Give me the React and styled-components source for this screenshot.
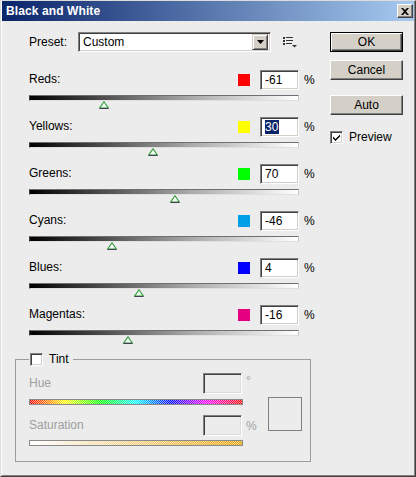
import React from "react";
import styled, { createGlobalStyle } from "styled-components";

const Global = createGlobalStyle`
  html, body { margin: 0; padding: 0; background: #ececec; }
  body {
    font-family: "Liberation Sans", Arial, sans-serif;
    font-size: 12px;
    color: #000;
  }
  * { box-sizing: border-box; }
`;

const Window = styled.div`
  width: 416px;
  height: 477px;
  background: #ececec;
  border: 1px solid;
  border-color: #dcdcdc #404040 #404040 #dcdcdc;
  display: flex;
  flex-direction: column;
`;

const Frame = styled.div`
  flex: 1;
  display: flex;
  flex-direction: column;
  border: 1px solid;
  border-top: 0;
  border-color: #fff #808080 #808080 #fff;
`;

const TitleBar = styled.div`
  height: 20px;
  display: flex;
  align-items: center;
  justify-content: space-between;
  padding: 0 1px 0 4px;
  background: linear-gradient(to right, #0a246a, #a6caf0);
`;

const TitleText = styled.span`
  color: #fff;
  font-weight: bold;
  font-size: 12px;
  letter-spacing: 0.1px;
`;

const CloseButton = styled.div`
  width: 16px;
  height: 14px;
  background: #d4d0c8;
  border: 1px solid;
  border-color: #fff #404040 #404040 #fff;
  box-shadow: inset -1px -1px #808080;
  display: flex;
  align-items: center;
  justify-content: center;
`;

const Body = styled.div`
  display: flex;
  padding: 11px 0 0 13px;
`;

const LeftPanel = styled.div`
  width: 303px;
  display: flex;
  flex-direction: column;
`;

const RightPanel = styled.div`
  width: 73px;
  margin-left: 12px;
  display: flex;
  flex-direction: column;
`;

const PresetRow = styled.div`
  margin-left: 14px;
  height: 20px;
  display: flex;
  align-items: center;
`;

const PresetLabel = styled.span`
  width: 49px;
`;

const Dropdown = styled.div`
  width: 193px;
  height: 20px;
  background: #fff;
  border: 1px solid;
  border-color: #808080 #fff #fff #808080;
  box-shadow: inset 1px 1px #404040, inset -1px -1px #d4d0c8;
  display: flex;
  align-items: center;
  padding: 0 2px 0 4px;
`;

const DropdownText = styled.span`
  flex: 1;
`;

const DropButton = styled.div`
  width: 16px;
  height: 16px;
  background: #d4d0c8;
  border: 1px solid;
  border-color: #d4d0c8 #404040 #404040 #d4d0c8;
  box-shadow: inset 1px 1px #fff, inset -1px -1px #808080;
  display: flex;
  align-items: center;
  justify-content: center;
`;

const MenuIcon = styled.svg`
  margin-left: 12px;
`;

const Rows = styled.div`
  margin-top: 18px;
  display: flex;
  flex-direction: column;
`;

const SliderRow = styled.div`
  padding-left: 14px;
  margin-bottom: 9px;
  display: flex;
  flex-direction: column;
`;

const RowHeader = styled.div`
  width: 286px;
  height: 20px;
  display: flex;
  align-items: center;
`;

const Label = styled.span`
  flex: 1;
  color: ${(p) => (p.$disabled ? "#a0a0a0" : "#000")};
  margin-top: -2px;
`;

const Swatch = styled.div`
  width: 12px;
  height: 12px;
  margin-right: 10px;
  background: ${(p) => p.$color};
`;

const ValueBox = styled.div`
  width: 39px;
  height: 20px;
  background: #fff;
  border: 1px solid;
  border-color: #808080 #fff #fff #808080;
  box-shadow: inset 1px 1px #404040, inset -1px -1px #d4d0c8;
  display: flex;
  align-items: center;
  padding-left: 4px;
`;

const Selected = styled.span`
  background: #0a246a;
  color: #fff;
  padding: 0 1px 0 0;
  line-height: 14px;
`;

const Unit = styled.span`
  width: 11px;
  margin-left: 5px;
  color: ${(p) => (p.$disabled ? "#a0a0a0" : "#000")};
`;

const Track = styled.div`
  width: 270px;
  height: 6px;
  margin-top: 5px;
  background: linear-gradient(to right, #000 0%, #555 30%, #aaa 60%, #fff 100%);
  border: 1px solid;
  border-color: #707070 #c8c8c8 #e0e0e0 #404040;
`;

const ThumbLane = styled.div`
  position: relative;
  width: 270px;
  height: 7px;
`;

const Thumb = styled.svg`
  position: absolute;
  top: 0;
  left: ${(p) => p.$pos}px;
  transform: translateX(-50%);
`;

const TintGroup = styled.fieldset`
  width: 296px;
  margin: 0;
  padding: 7px 0 15px 13px;
  border: 1px solid #9c9c9c;
  display: flex;
  align-items: flex-start;
`;

const Legend = styled.legend`
  padding: 0 4px 0 1px;
  display: flex;
  align-items: center;
  gap: 6px;
  height: 14px;
`;

const CheckBox = styled.div`
  width: 13px;
  height: 13px;
  background: #fff;
  border: 1px solid;
  border-color: #808080 #fff #fff #808080;
  box-shadow: inset 1px 1px #404040, inset -1px -1px #d4d0c8;
  display: flex;
  align-items: center;
  justify-content: center;
`;

const TintControls = styled.div`
  width: 230px;
  display: flex;
  flex-direction: column;
`;

const TintRow = styled.div`
  height: 21px;
  display: flex;
  align-items: center;
  margin-top: ${(p) => p.$gap || 0}px;
`;

const DisabledBox = styled.div`
  width: 39px;
  height: 21px;
  background: #ececec;
  border: 1px solid;
  border-color: #808080 #fff #fff #808080;
  box-shadow: inset 1px 1px #404040, inset -1px -1px #dcdcdc;
`;

const TintUnit = styled.span`
  width: 13px;
  margin-left: 4px;
  color: #a0a0a0;
  align-self: ${(p) => (p.$raised ? "flex-start" : "center")};
  margin-top: ${(p) => (p.$raised ? "1px" : "0")};
`;

const checker = `repeating-conic-gradient(rgba(255,255,255,0.55) 0 25%, transparent 0 50%) 0 0 / 2px 2px`;

const ColorBar = styled.div`
  width: 214px;
  height: 6px;
  margin-top: ${(p) => p.$gap}px;
  border: 1px solid #8a8a8a;
  background: ${checker}, ${(p) => p.$fill};
`;

const TintPreview = styled.div`
  width: 34px;
  height: 34px;
  margin: 24px 0 0 9px;
  border: 1px solid #808080;
`;

const Button = styled.div`
  width: 73px;
  height: 20px;
  margin-top: ${(p) => p.$gap || 0}px;
  background: #d4d0c8;
  display: flex;
  align-items: center;
  justify-content: center;
  font-size: 12px;
  border: 1px solid;
  ${(p) =>
    p.$default
      ? `border-color: #000;
         box-shadow: inset 1px 1px #fff, inset -1px -1px #404040, inset -2px -2px #808080;`
      : `border-color: #fff #404040 #404040 #fff;
         box-shadow: inset -1px -1px #808080;`}
`;

const PreviewRow = styled.div`
  margin-top: 15px;
  display: flex;
  align-items: center;
  gap: 6px;
`;

const channels = [
  { name: "Reds", color: "#ff0000", value: -61 },
  { name: "Yellows", color: "#ffff00", value: 30, selected: true },
  { name: "Greens", color: "#00ff00", value: 70 },
  { name: "Cyans", color: "#00a0e9", value: -46 },
  { name: "Blues", color: "#0000ff", value: 4 },
  { name: "Magentas", color: "#e4007f", value: -16 },
];

// slider spans -200% .. 300% over the 270px track
const toPx = (v) => ((v + 200) / 500) * 270;

const ThumbGlyph = ({ pos }) => (
  <Thumb $pos={pos} width="11" height="8" viewBox="0 0 11 8">
    <path d="M5.5 0.8 L9.8 7 H1.2 Z" fill="#f2fbf2" stroke="#2f9a35" strokeWidth="1.1" />
    <path d="M1 7.5 H10" stroke="#4a3a5a" strokeWidth="1" />
  </Thumb>
);

const CheckMark = () => (
  <svg width="7" height="7" viewBox="0 0 7 7">
    <path d="M0 2.5 L2.5 5 L7 0.5 V2.5 L2.5 7 L0 4.5 Z" fill="#000" />
  </svg>
);

export default function App() {
  return (
    <>
      <Global />
      <Window>
        <Frame>
          <TitleBar>
            <TitleText>Black and White</TitleText>
            <CloseButton>
              <svg width="8" height="7" viewBox="0 0 8 7">
                <path d="M0 0 H2 L4 2 L6 0 H8 L5 3.5 L8 7 H6 L4 5 L2 7 H0 L3 3.5 Z" fill="#000" />
              </svg>
            </CloseButton>
          </TitleBar>
          <Body>
            <LeftPanel>
              <PresetRow>
                <PresetLabel>Preset:</PresetLabel>
                <Dropdown>
                  <DropdownText>Custom</DropdownText>
                  <DropButton>
                    <svg width="7" height="4" viewBox="0 0 7 4">
                      <path d="M0 0 H7 L3.5 4 Z" fill="#000" />
                    </svg>
                  </DropButton>
                </Dropdown>
                <MenuIcon width="14" height="12" viewBox="0 0 14 12">
                  <g fill="#333">
                    <rect x="0" y="1" width="2" height="2" />
                    <rect x="3" y="1" width="7" height="1" />
                    <rect x="0" y="4" width="2" height="2" />
                    <rect x="3" y="4" width="7" height="1" />
                    <rect x="0" y="7" width="2" height="2" />
                    <rect x="3" y="7" width="6" height="1" />
                    <path d="M9 9 H14 L11.5 11.5 Z" />
                  </g>
                </MenuIcon>
              </PresetRow>

              <Rows>
                {channels.map((c) => (
                  <SliderRow key={c.name}>
                    <RowHeader>
                      <Label>{c.name}:</Label>
                      <Swatch $color={c.color} />
                      <ValueBox>
                        {c.selected ? <Selected>{c.value}</Selected> : c.value}
                      </ValueBox>
                      <Unit>%</Unit>
                    </RowHeader>
                    <Track />
                    <ThumbLane>
                      <ThumbGlyph pos={toPx(c.value)} />
                    </ThumbLane>
                  </SliderRow>
                ))}
              </Rows>

              <TintGroup>
                <Legend>
                  <CheckBox />
                  <span>Tint</span>
                </Legend>
                <TintControls>
                  <TintRow>
                    <Label $disabled>Hue</Label>
                    <DisabledBox />
                    <TintUnit $raised>°</TintUnit>
                  </TintRow>
                  <ColorBar
                    $gap={5}
                    $fill="linear-gradient(to right, #ff0000, #ffff00, #00ff00, #00ffff, #0000ff, #ff00ff, #ff0000)"
                  />
                  <TintRow $gap={10}>
                    <Label $disabled>Saturation</Label>
                    <DisabledBox />
                    <TintUnit>%</TintUnit>
                  </TintRow>
                  <ColorBar $gap={4} $fill="linear-gradient(to right, #ffffff, #e6a000)" />
                </TintControls>
                <TintPreview />
              </TintGroup>
            </LeftPanel>

            <RightPanel>
              <Button $default>OK</Button>
              <Button $gap={8}>Cancel</Button>
              <Button $gap={15}>Auto</Button>
              <PreviewRow>
                <CheckBox>
                  <CheckMark />
                </CheckBox>
                <span>Preview</span>
              </PreviewRow>
            </RightPanel>
          </Body>
        </Frame>
      </Window>
    </>
  );
}
